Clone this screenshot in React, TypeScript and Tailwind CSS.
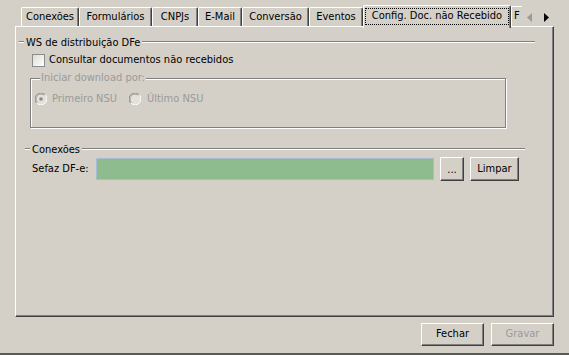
import React from "react";

const tabs = [
    { label: "Conexões", w: "w-[58px]" },
    { label: "Formulários", w: "w-[73px]" },
    { label: "CNPJs", w: "w-[46px]" },
    { label: "E-Mail", w: "w-[44px]" },
    { label: "Conversão", w: "w-[67px]" },
    { label: "Eventos", w: "w-[54px]" },
];

// etched line (gray over white)
const Etched = ({ className = "" }: { className?: string }) => (
    <div className={`h-[2px] border-t border-t-[#808080] border-b border-b-white ${className}`} />
);

const Radio = ({ checked }: { checked?: boolean }) => (
    <svg width="12" height="12" viewBox="0 0 12 12" className="shrink-0">
        <circle cx="6" cy="6" r="5.5" fill="#e4e1db" />
        <path d="M1.8 10.2 A5.5 5.5 0 0 1 10.2 1.8" fill="none" stroke="#8a8a8a" strokeWidth="1" />
        <path d="M10.2 1.8 A5.5 5.5 0 0 1 1.8 10.2" fill="none" stroke="#ffffff" strokeWidth="1" />
        <path d="M2.6 9.4 A4.5 4.5 0 0 1 9.4 2.6" fill="none" stroke="#b0aca4" strokeWidth="1" />
        {checked && <circle cx="6" cy="6" r="1.8" fill="#8a8a8a" />}
    </svg>
);

const Button = ({ children, className = "", disabled }: { children: React.ReactNode; className?: string; disabled?: boolean }) => (
    <button
        className={`flex items-center justify-center border border-t-white border-l-white border-r-[#404040] border-b-[#404040] shadow-[inset_-1px_-1px_0_#808080] bg-[#d4d0c8] ${disabled ? "text-[#9a9a9a]" : "text-black"} ${className}`}
    >
        {children}
    </button>
);

const App = () => {
    return (
        <div
            className="w-[569px] h-[355px] bg-[#d4d0c8] flex flex-col pl-[15px] pr-[15px] pt-[5px] border-b-2 border-b-[#5a5a5a] text-[11px] text-black overflow-hidden"
            style={{ fontFamily: '"DejaVu Sans Condensed", "Liberation Sans", sans-serif' }}
        >
            {/* tab strip */}
            <div className="flex items-end h-[21px] pl-[6px] relative">
                {tabs.map((t) => (
                    <div
                        key={t.label}
                        className={`${t.w} h-[19px] shrink-0 flex items-center justify-center border-t border-l border-r border-t-white border-l-white border-r-[#404040] shadow-[inset_-1px_0_0_#808080] rounded-t-[2px]`}
                    >
                        {t.label}
                    </div>
                ))}
                <div className="w-[148px] h-[23px] -mb-[2px] shrink-0 relative z-10 bg-[#d4d0c8] flex border-t border-l border-r border-t-white border-l-white border-r-[#404040] shadow-[inset_-1px_0_0_#808080] rounded-t-[2px] pt-[2px] pl-[1px] pr-[1px] pb-[3px]">
                    <div className="flex-1 flex items-center justify-center outline-1 outline-dotted outline-black -outline-offset-1">
                        Config. Doc. não Recebido
                    </div>
                </div>
                <div className="w-[11px] h-[20px] shrink-0 overflow-hidden border-t border-l border-t-white border-l-white pl-[2px] flex items-center">
                    F
                </div>
                <div className="w-[31px] h-[21px] shrink-0 bg-[#d4d0c8] relative flex items-start pt-[8px] pl-[5px] gap-[12px]">
                    <svg width="5" height="9" viewBox="0 0 5 9">
                        <path d="M5 0 L0 4.5 L5 9 Z" fill="#9a9a9a" />
                    </svg>
                    <svg width="5" height="9" viewBox="0 0 5 9">
                        <path d="M0 0 L5 4.5 L0 9 Z" fill="#000000" />
                    </svg>
                </div>
            </div>

            {/* tab page */}
            <div className="h-[291px] border border-t-white border-l-white border-r-[#404040] border-b-[#404040] shadow-[inset_-1px_-1px_0_#808080] flex flex-col">
                {/* WS header */}
                <div className="flex items-center h-[14px] mt-[8px] ml-[3px] mr-[18px]">
                    <Etched className="w-[5px]" />
                    <span className="px-[2px] leading-none">WS de distribuição DFe</span>
                    <Etched className="flex-1" />
                </div>

                <div className="flex items-center mt-[5px] ml-[16px] h-[13px] gap-[4px]">
                    <div className="w-[13px] h-[13px] border border-[#8c8c8c] bg-gradient-to-br from-[#dcdcd8] to-white" />
                    <span>Consultar documentos não recebidos</span>
                </div>

                <div className="relative ml-[14px] mt-[11px] w-[476px] h-[50px] border border-[#808080] shadow-[inset_1px_1px_0_#fff,1px_1px_0_#fff]">
                    <span className="absolute left-[9px] -top-[8px] px-[1px] bg-[#d4d0c8] text-[#9a9a9a] leading-[14px]">
                        Iniciar download por:
                    </span>
                    <div className="flex items-center mt-[14px] ml-[4px] h-[12px] text-[#9a9a9a]">
                        <div className="w-[94px] flex items-center gap-[5px]">
                            <Radio checked />
                            <span>Primeiro NSU</span>
                        </div>
                        <div className="flex items-center gap-[6px]">
                            <Radio />
                            <span>Último NSU</span>
                        </div>
                    </div>
                </div>

                {/* Conexões header */}
                <div className="flex items-center h-[14px] mt-[14px] ml-[9px] mr-[28px]">
                    <Etched className="w-[5px]" />
                    <span className="px-[2px] leading-none">Conexões</span>
                    <Etched className="flex-1" />
                </div>

                <div className="flex items-center mt-[1px] ml-[16px] h-[24px]">
                    <span className="w-[64px] shrink-0">Sefaz DF-e:</span>
                    <div className="w-[338px] h-[22px] bg-[#8fbc8f] border border-[#a7bcd3]" />
                    <Button className="ml-[6px] w-[24px] h-[24px] leading-none">...</Button>
                    <Button className="ml-[6px] w-[49px] h-[24px]">Limpar</Button>
                </div>
            </div>

            {/* bottom buttons */}
            <div className="flex justify-end gap-[7px] mt-[6px]">
                <Button className="w-[63px] h-[23px]">Fechar</Button>
                <Button className="w-[63px] h-[23px]" disabled>
                    Gravar
                </Button>
            </div>
        </div>
    );
};

export default App;
